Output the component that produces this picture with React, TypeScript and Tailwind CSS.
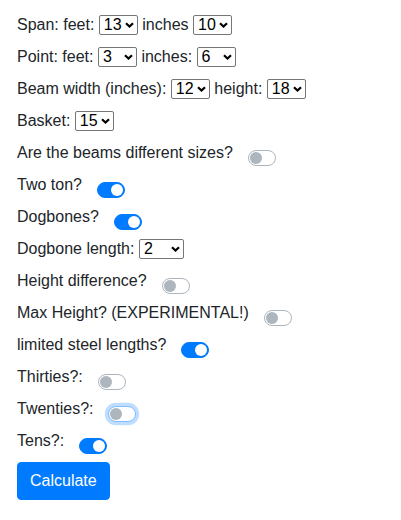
import clsx from 'clsx';

function Sel({ value, wide }: { value: string; wide?: boolean }) {
  return (
    <span
      className={clsx(
        'relative mt-0.5 inline-block h-5 align-top',
        wide ? 'w-[45px]' : 'w-[39px]'
      )}
    >
      <select
        defaultValue={value}
        className="block h-5 w-full appearance-none rounded-[2px] border border-[#767676] bg-white pl-1 text-base leading-[18px] text-black"
      >
        <option value={value}>{value}</option>
      </select>
      <svg
        className="pointer-events-none absolute right-1 top-[7px]"
        width="9"
        height="6"
        viewBox="0 0 9 6"
        fill="none"
      >
        <path d="M1 1.2l3.5 3.3 3.5-3.3" stroke="#000" strokeWidth="2.2" />
      </svg>
    </span>
  );
}

function Toggle({ on, focus }: { on?: boolean; focus?: boolean }) {
  return (
    <span
      className={clsx(
        'relative ml-[15px] mt-[9px] inline-block h-4 w-7 shrink-0 rounded-full border',
        on
          ? 'border-[#007bff] bg-[#007bff]'
          : focus
          ? 'border-[#80bdff] bg-white shadow-[0_0_0_3.2px_rgba(0,123,255,0.25)]'
          : 'border-[#adb5bd] bg-white'
      )}
    >
      <span
        className={clsx(
          'absolute top-px size-3 rounded-full',
          on ? 'left-[13px] bg-white' : 'left-px bg-[#adb5bd]'
        )}
      />
    </span>
  );
}

function SwitchRow({ label, on, focus }: { label: string; on?: boolean; focus?: boolean }) {
  return (
    <div className="mb-2 flex h-6 items-start">
      <span>{label}</span>
      <Toggle on={on} focus={focus} />
    </div>
  );
}

export default function App() {
  return (
    <div className="min-h-screen bg-white pl-[17px] pt-[13px] font-['Liberation_Sans',Arial,sans-serif] text-base leading-6 text-[#212529]">
      <div className="mb-2 h-6 whitespace-nowrap">
        Span: feet: <Sel value="13" /> inches <Sel value="10" />
      </div>
      <div className="mb-2 h-6 whitespace-nowrap">
        Point: feet: <Sel value="3" /> inches: <Sel value="6" />
      </div>
      <div className="mb-2 h-6 whitespace-nowrap">
        Beam width (inches): <Sel value="12" /> height: <Sel value="18" />
      </div>
      <div className="mb-2 h-6 whitespace-nowrap">
        Basket: <Sel value="15" />
      </div>

      <SwitchRow label="Are the beams different sizes?" />
      <SwitchRow label="Two ton?" on />
      <SwitchRow label="Dogbones?" on />

      <div className="mb-2 h-6 whitespace-nowrap">
        Dogbone length: <Sel value="2" wide />
      </div>

      <SwitchRow label="Height difference?" />
      <SwitchRow label="Max Height? (EXPERIMENTAL!)" />
      <SwitchRow label="limited steel lengths?" on />
      <SwitchRow label="Thirties?:" />
      <SwitchRow label="Twenties?:" focus />
      <SwitchRow label="Tens?:" on />

      <button className="mt-px rounded border border-[#007bff] bg-[#007bff] px-3 py-1.5 leading-6 text-white">
        Calculate
      </button>
    </div>
  );
}
